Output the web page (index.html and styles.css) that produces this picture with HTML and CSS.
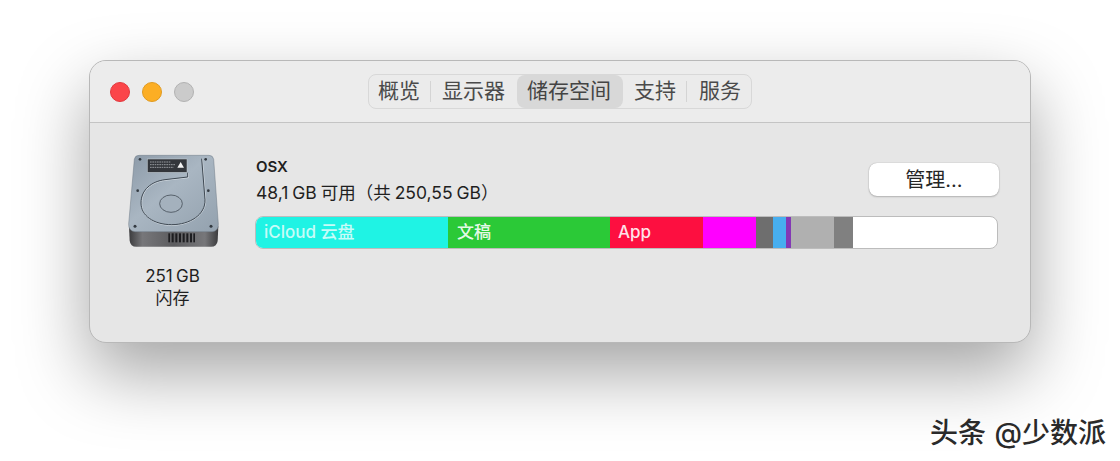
FILE: index.html
```html
<!DOCTYPE html>
<html lang="zh-CN">
<head>
  <meta charset="UTF-8" />
  <title>储存空间</title>
  <link rel="stylesheet" href="styles.css">
</head>
<body>
  <div class="window">
    <div class="titlebar">
      <div class="lights">
        <span class="light red"></span>
        <span class="light yellow"></span>
        <span class="light off"></span>
      </div>
      <div class="tabs">
        <div class="tab first">概览</div>
        <div class="tab second">显示器</div>
        <div class="tab active">储存空间</div>
        <div class="tab fourth">支持</div>
        <div class="tab last">服务</div>
      </div>
    </div>

    <div class="content">
      <div class="drive">
        <svg class="drive-icon" viewBox="36 25 282 285" width="94" height="95">
          <defs>
            <linearGradient id="plate" x1="0" y1="0" x2="1" y2="1">
              <stop offset="0" stop-color="#8c9aa8" />
              <stop offset="0.45" stop-color="#a9b6c2" />
              <stop offset="1" stop-color="#93a1ae" />
            </linearGradient>
            <linearGradient id="base" x1="0" y1="0" x2="1" y2="0">
              <stop offset="0" stop-color="#3b3b3d" />
              <stop offset="0.15" stop-color="#77777a" />
              <stop offset="0.5" stop-color="#5c5c5f" />
              <stop offset="0.85" stop-color="#77777a" />
              <stop offset="1" stop-color="#3b3b3d" />
            </linearGradient>
          </defs>
          <path d="M42 245 L44 288 Q46 306 64 306 H288 Q306 306 308 288 L310 245 Z" fill="url(#base)" />
          <path d="M72 32 H282 Q294 32 296 44 L310 238 Q311 259 292 261 H60 Q40 259 41 238 L58 44 Q60 32 72 32 Z" fill="url(#plate)" stroke="#6f7b87" stroke-width="1.5" />
          <g fill="#1d1d20">
            <rect x="160" y="266" width="5" height="27" />
            <rect x="170" y="266" width="6" height="27" />
            <rect x="181" y="266" width="6" height="27" />
            <rect x="192" y="266" width="6" height="27" />
            <rect x="203" y="266" width="6" height="27" />
            <rect x="214" y="266" width="6" height="27" />
            <rect x="225" y="266" width="6" height="27" />
            <rect x="235" y="266" width="5" height="27" />
          </g>
          <rect x="97" y="43" width="119" height="40" fill="#33363b" stroke="#c9d1d8" stroke-width="1.5" />
          <path d="M187 69 L197 52 L207 69 Z" fill="#f2f2f2" />
          <path d="M105 52 H168 M105 60 H180 M105 68 H176" stroke="#a9adb2" stroke-width="2.5" stroke-dasharray="5 2" />
          <path d="M262 42 L272 165 C274 210 226 242 170 242 C114 242 80 212 80 175 C80 135 112 112 150 107 L220 99 V85" fill="none" stroke="#d3dbe2" stroke-width="3" />
          <path d="M260 42 L270 165 C272 210 225 240 170 240 C115 240 78 212 78 175 C78 135 110 110 150 105 L218 97 V84" fill="none" stroke="#3f4953" stroke-width="3" />
          <ellipse cx="168" cy="177" rx="34" ry="26" fill="#a4b1bd" stroke="#48525c" stroke-width="2.5" />
          <g fill="#333a41">
            <circle cx="75" cy="44" r="4" />
            <circle cx="272" cy="44" r="4" />
            <circle cx="68" cy="138" r="4" />
            <circle cx="280" cy="138" r="4" />
            <circle cx="60" cy="245" r="4.5" />
            <circle cx="288" cy="245" r="4.5" />
          </g>
        </svg>
        <div class="drive-label">251 GB<br>闪存</div>
      </div>

      <div class="info">
        <div class="info-head">
          <div class="info-text">
            <div class="volume">OSX</div>
            <div class="free">48,1 GB 可用（共 250,55 GB）</div>
          </div>
          <button class="manage">管理...</button>
        </div>
        <div class="bar">
          <div class="seg icloud">iCloud 云盘</div>
          <div class="seg docs">文稿</div>
          <div class="seg app">App</div>
          <div class="seg magenta"></div>
          <div class="seg dark"></div>
          <div class="seg blue"></div>
          <div class="seg purple"></div>
          <div class="seg light-grey"></div>
          <div class="seg grey"></div>
        </div>
      </div>
    </div>
  </div>

  <div class="watermark">头条 @少数派</div>
</body>
</html>
```

FILE: styles.css
```css
* {
  box-sizing: border-box;
}

html, body {
  height: 100%;
}

body {
  margin: 0;
  padding: 60px 89px 0;
  overflow: hidden;
  background-color: #fff;
  font-family: Inter, "Liberation Sans", "Noto Sans CJK SC", sans-serif;
  color: #1f1f1f;
}

.window {
  width: 942px;
  height: 283px;
  background-color: #e6e6e6;
  border: 1px solid #b8b8b8;
  border-radius: 17px;
  box-shadow: 0 30px 70px rgba(0, 0, 0, 0.36);
}

.titlebar {
  display: flex;
  align-items: center;
  height: 62px;
  padding: 0 0 0 20px;
  background-color: #ececec;
  border-bottom: 1px solid #c4c4c4;
  border-radius: 16px 16px 0 0;
}

.lights {
  display: flex;
  gap: 12px;
  width: 258px;
  margin-top: 1px;
}

.light {
  width: 20px;
  height: 20px;
  border-radius: 50%;
}

.red { background-color: #fb4549; border: 1px solid #e2383d; }
.yellow { background-color: #fcae24; border: 1px solid #e09a20; }
.off { background-color: #cbcbcb; border: 1px solid #b2b2b2; }

.tabs {
  display: flex;
  height: 35px;
  border: 1px solid #d8d8d8;
  border-radius: 8px;
  background-color: #ebebeb;
  font-size: 21px;
  line-height: 32px;
  color: #4a4a4a;
}

.tab {
  position: relative;
  white-space: nowrap;
}

/* short divider between tabs */
.first::after, .fourth::after {
  content: "";
  position: absolute;
  right: 0;
  top: 6px;
  height: 21px;
  width: 1px;
  background-color: #d4d4d4;
}

.first { padding: 0 11px 0 9px; }
.second { padding: 0 12px 0 11px; }
.active {
  padding: 0 12px 0 10px;
  background-color: #d8d8d8;
  border-radius: 8px;
  color: #444;
}
.fourth { padding: 0 11px 0 11px; }
.last { padding: 0 10px 0 12px; }

.content {
  display: flex;
  padding: 30px 32px 0 37px;
}

.drive {
  width: 94px;
  text-align: center;
}

.drive-icon {
  display: block;
}

.drive-label {
  margin: 17px 3px 0 0;
  font-size: 17px;
  line-height: 22px;
  word-spacing: -1.5px;
}

.info {
  flex: 1;
  margin-left: 34px;
}

.info-head {
  display: flex;
  justify-content: space-between;
  height: 63px;
}

.info-text {
  padding-left: 1px;
}

.volume {
  margin-top: 4px;
  font-size: 15px;
  font-weight: 600;
  line-height: 20px;
}

.free {
  margin-top: 5px;
  font-size: 17.5px;
  line-height: 22px;
  word-spacing: -1px;
}

.manage {
  width: 130px;
  height: 33px;
  margin: 10px -1px 0 0;
  padding: 0 0 3px;
  background-color: #fff;
  border: none;
  border-radius: 8px;
  box-shadow: 0 0 1px rgba(0, 0, 0, 0.35), 0 1px 2px rgba(0, 0, 0, 0.2);
  font-family: inherit;
  font-size: 20px;
  color: #262626;
}

.bar {
  display: flex;
  height: 33px;
  overflow: hidden;
  background-color: #fff;
  border: 1px solid #bcbcbc;
  border-radius: 8px;
}

.seg {
  height: 100%;
  font-size: 17px;
  font-weight: 500;
  line-height: 30px;
  white-space: nowrap;
  color: rgba(255, 255, 255, 0.9);
}

.icloud { width: 192px; padding-left: 8px; background-color: #1ff3e4; color: rgba(255, 255, 255, 0.75); }
.docs { width: 162px; padding-left: 9px; background-color: #2bc937; }
.app { width: 93px; padding-left: 8px; background-color: #fd0f40; }
.magenta { width: 53px; background-color: #ff00ff; }
.dark { width: 17px; background-color: #6e6e6e; }
.blue { width: 13px; background-color: #47aeef; }
.purple { width: 5px; background-color: #8338b5; }
.light-grey { width: 43px; background-color: #b0b0b0; }
.grey { width: 19px; background-color: #808080; }

.watermark {
  position: absolute;
  right: 14px;
  bottom: 10px;
  font-size: 28px;
  font-weight: 500;
  line-height: 36px;
  word-spacing: 1px;
  color: #2a2a2a;
  text-shadow: 1px 1px 0 #fff;
}
```
